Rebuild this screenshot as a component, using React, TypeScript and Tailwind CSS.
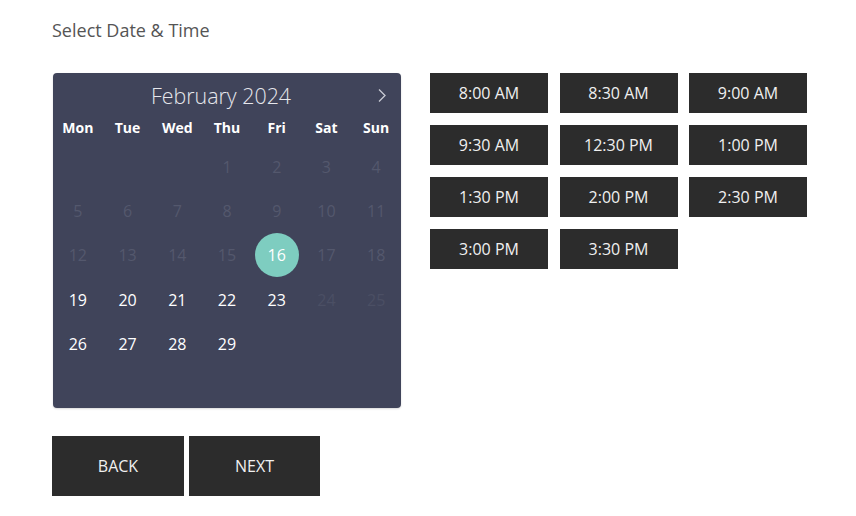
import React from "react";

const times = [
  "8:00 AM",
  "8:30 AM",
  "9:00 AM",
  "9:30 AM",
  "12:30 PM",
  "1:00 PM",
  "1:30 PM",
  "2:00 PM",
  "2:30 PM",
  "3:00 PM",
  "3:30 PM",
];

const dayNames = ["Mon", "Tue", "Wed", "Thu", "Fri", "Sat", "Sun"];

// null = empty cell, "dim" = past, "off" = weekend unavailable
type Cell = { n: number; kind: "dim" | "on" | "off" | "sel" } | null;

const cell = (n: number): Cell => {
  if (n === 16) return { n, kind: "sel" };
  if (n < 19) return { n, kind: "dim" };
  if (n === 24 || n === 25) return { n, kind: "off" };
  return { n, kind: "on" };
};

const weeks: Cell[][] = [
  [null, null, null, 1, 2, 3, 4].map((n) => (n ? cell(n) : null)),
  [5, 6, 7, 8, 9, 10, 11].map(cell),
  [12, 13, 14, 15, 16, 17, 18].map(cell),
  [19, 20, 21, 22, 23, 24, 25].map(cell),
  [26, 27, 28, 29, 0, 0, 0].map((n) => (n ? cell(n) : null)),
  [0, 0, 0, 0, 0, 0, 0].map(() => null),
];

const Calendar = () => {
  return (
    <div className="ml-px w-[348px] h-[335px] rounded-[4px] bg-[#40445a] shadow-[0_1px_2px_rgba(0,0,0,0.15)]">
      <div className="flex items-center h-[46px] pb-[1px]">
        <span className="ml-[98px] text-[21.4px] font-light leading-none text-[#e6e7ec]">
          February 2024
        </span>
        <svg
          className="ml-auto mr-[14px]"
          width="10"
          height="15"
          viewBox="0 0 10 15"
          fill="none"
        >
          <path d="M2 1.5 L8 7.5 L2 13.5" stroke="#c9cbd5" strokeWidth="1.3" />
        </svg>
      </div>
      <div className="grid grid-cols-7 h-[18px] items-center">
        {dayNames.map((d) => (
          <div
            key={d}
            className="text-center text-[14px] font-bold leading-none text-white"
          >
            {d}
          </div>
        ))}
      </div>
      <div className="mt-[8px]">
        {weeks.map((week, i) => (
          <div key={i} className="grid grid-cols-7 h-[44px]">
            {week.map((c, j) => (
              <div key={j} className="flex items-center justify-center">
                {c && c.kind === "sel" && (
                  <span className="flex items-center justify-center w-[44px] h-[44px] rounded-full bg-[#7ecdc0] text-[16px] text-white">
                    {c.n}
                  </span>
                )}
                {c && c.kind === "on" && (
                  <span className="pt-[2px] text-[16px] text-white">{c.n}</span>
                )}
                {c && c.kind === "dim" && (
                  <span className="text-[16px] text-[#54586d]">{c.n}</span>
                )}
                {c && c.kind === "off" && (
                  <span className="pt-[2px] text-[16px] text-[#4b4f64]">{c.n}</span>
                )}
              </div>
            ))}
          </div>
        ))}
      </div>
    </div>
  );
};

export default function App() {
  return (
    <div
      className="min-h-[516px] bg-white pt-[17px] pl-[52px]"
      style={{ fontFamily: '"Open Sans", "Liberation Sans", sans-serif' }}
    >
      <h2 className="text-[18px] leading-[27px] text-[#555555]">
        Select Date &amp; Time
      </h2>

      <div className="mt-[29px] flex items-start">
        <Calendar />
        <div className="ml-[29px] grid grid-cols-[repeat(3,118px)] gap-x-[11.5px] gap-y-[12px]">
          {times.map((t) => (
            <button
              key={t}
              className="h-[40px] bg-[#2c2c2c] text-[16px] text-[#f0f0f0]"
            >
              {t}
            </button>
          ))}
        </div>
      </div>

      <div className="mt-[28px] flex gap-[5px]">
        <button className="w-[132px] h-[60px] bg-[#2c2c2c] text-[16px] uppercase text-[#f0f0f0]">
          Back
        </button>
        <button className="w-[131px] h-[60px] bg-[#2c2c2c] text-[16px] uppercase text-[#f0f0f0]">
          Next
        </button>
      </div>
    </div>
  );
}
